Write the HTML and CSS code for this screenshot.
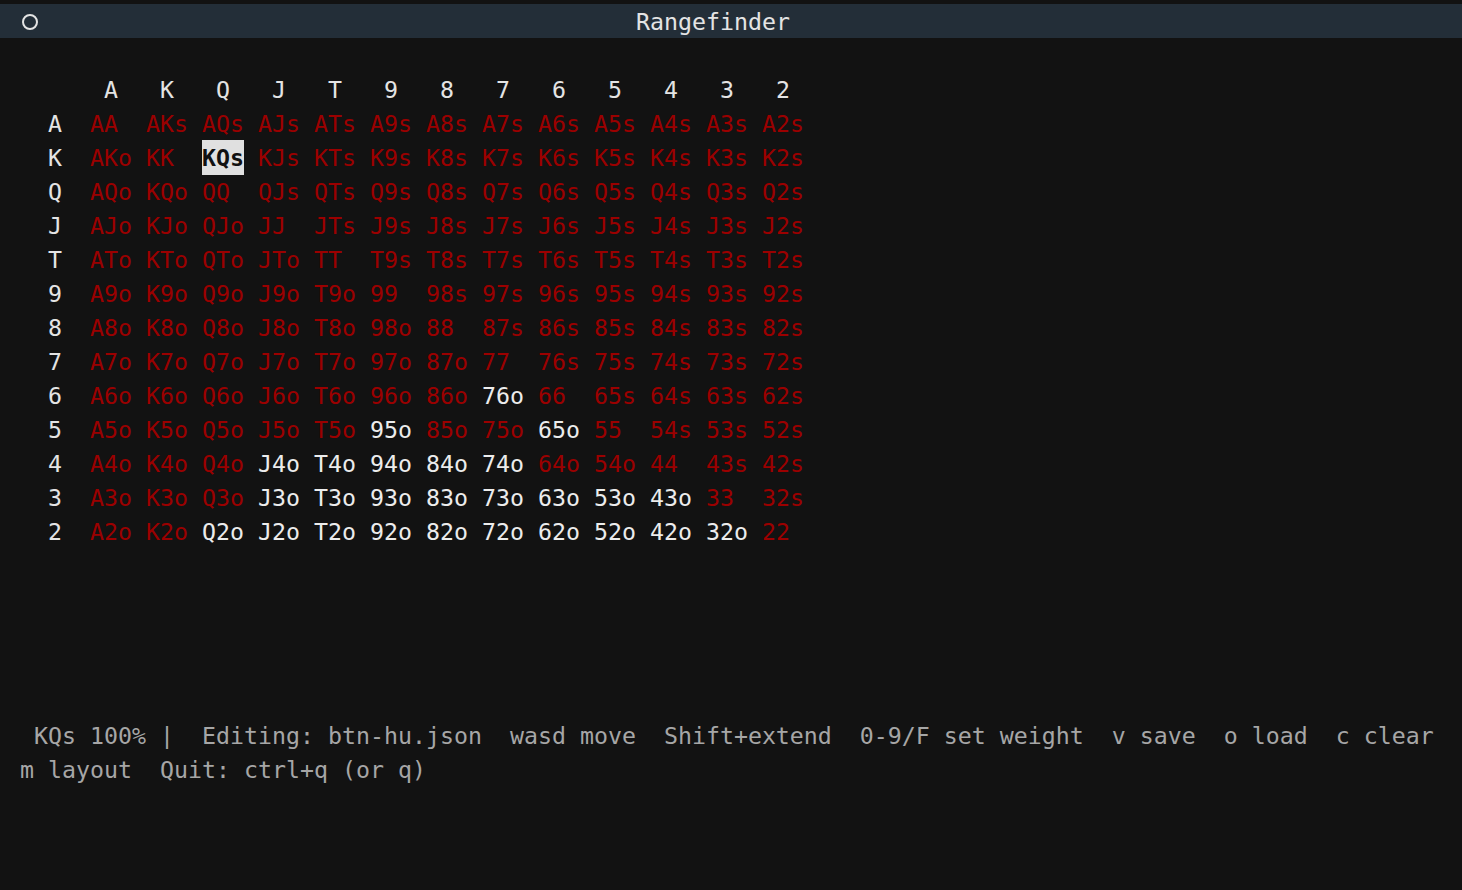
FILE: index.html
```html
<!DOCTYPE html>
<html>
<head>
<meta charset="utf-8">
<title>Rangefinder</title>
<link rel="stylesheet" href="styles.css">
</head>
<body>
<div class="titlebar">
  <span class="dot"></span>
  <span class="title">Rangefinder</span>
</div>
<div class="term">
  <div class="blank"></div>
  <div class="grid" id="grid"></div>
  <div class="blank"></div>
  <div class="blank"></div>
  <div class="blank"></div>
  <div class="blank"></div>
  <div class="blank"></div>
  <div class="status"> KQs 100% |  Editing: btn-hu.json  wasd move  Shift+extend  0-9/F set weight  v save  o load  c clear</div>
  <div class="status">m layout  Quit: ctrl+q (or q)</div>
</div>
<script src="app.js"></script>
</body>
</html>
```

FILE: app.js
```js
(function () {
  var ranks = ['A','K','Q','J','T','9','8','7','6','5','4','3','2'];
  var white = {
    '76o':1,'95o':1,'65o':1,
    'J4o':1,'T4o':1,'94o':1,'84o':1,'74o':1,
    'J3o':1,'T3o':1,'93o':1,'83o':1,'73o':1,'63o':1,'53o':1,'43o':1,
    'Q2o':1,'J2o':1,'T2o':1,'92o':1,'82o':1,'72o':1,'62o':1,'52o':1,'42o':1,'32o':1
  };
  var g = document.getElementById('grid');
  var html = '<div class="lbl"></div>';
  ranks.forEach(function (r) { html += '<div class="hdr">' + r + '</div>'; });
  ranks.forEach(function (r, i) {
    html += '<div class="lbl">' + r + '</div>';
    ranks.forEach(function (c, j) {
      var name;
      if (i === j) name = r + c;
      else if (j > i) name = r + c + 's';
      else name = c + r + 'o';
      var cls = 'cell';
      if (name === 'KQs') cls += ' sel';
      else if (white[name]) cls += ' on';
      else cls += ' off';
      html += '<div class="' + cls + '"><span>' + name + '</span></div>';
    });
  });
  g.innerHTML = html;
})();
```

FILE: styles.css
```css
html, body {
  margin: 0;
  padding: 0;
  background: #121212;
}
body {
  font-family: "DejaVu Sans Mono", "Liberation Mono", monospace;
  font-size: 23.25px;
  line-height: 34px;
  color: #e2e2e2;
  padding-top: 4px;
  height: 886px;
  overflow: hidden;
}
.titlebar {
  height: 34px;
  background: #232e38;
  display: flex;
  align-items: center;
}
.dot {
  width: 16px;
  height: 16px;
  border: 2px solid #e4e4e4;
  border-radius: 50%;
  margin-left: 22px;
  box-sizing: border-box;
  margin-top: 2px;
}
.title {
  margin-left: 598px;
  padding-top: 2px;
  color: #e4e4e4;
}
.term {
  padding-left: 20px;
  padding-top: 1px;
}
.blank {
  height: 34px;
}
.grid {
  display: grid;
  grid-template-columns: 70px repeat(13, 56px);
  grid-auto-rows: 34px;
}
.lbl {
  padding-left: 28px;
  color: #e4e4e4;
}
.hdr {
  padding-left: 14px;
  color: #e4e4e4;
}
.cell {
  white-space: pre;
}
.cell span {
  display: inline-block;
  height: 34px;
}
.off {
  color: #9b0000;
}
.on {
  color: #ececec;
}
.sel {
  margin-top: -1px;
}
.sel span {
  background: #e0e0e0;
  color: #111111;
  font-weight: bold;
  width: 42px;
  overflow: hidden;
  padding-top: 1px;
}
.status {
  white-space: pre;
  color: #a6a6a6;
}
```
